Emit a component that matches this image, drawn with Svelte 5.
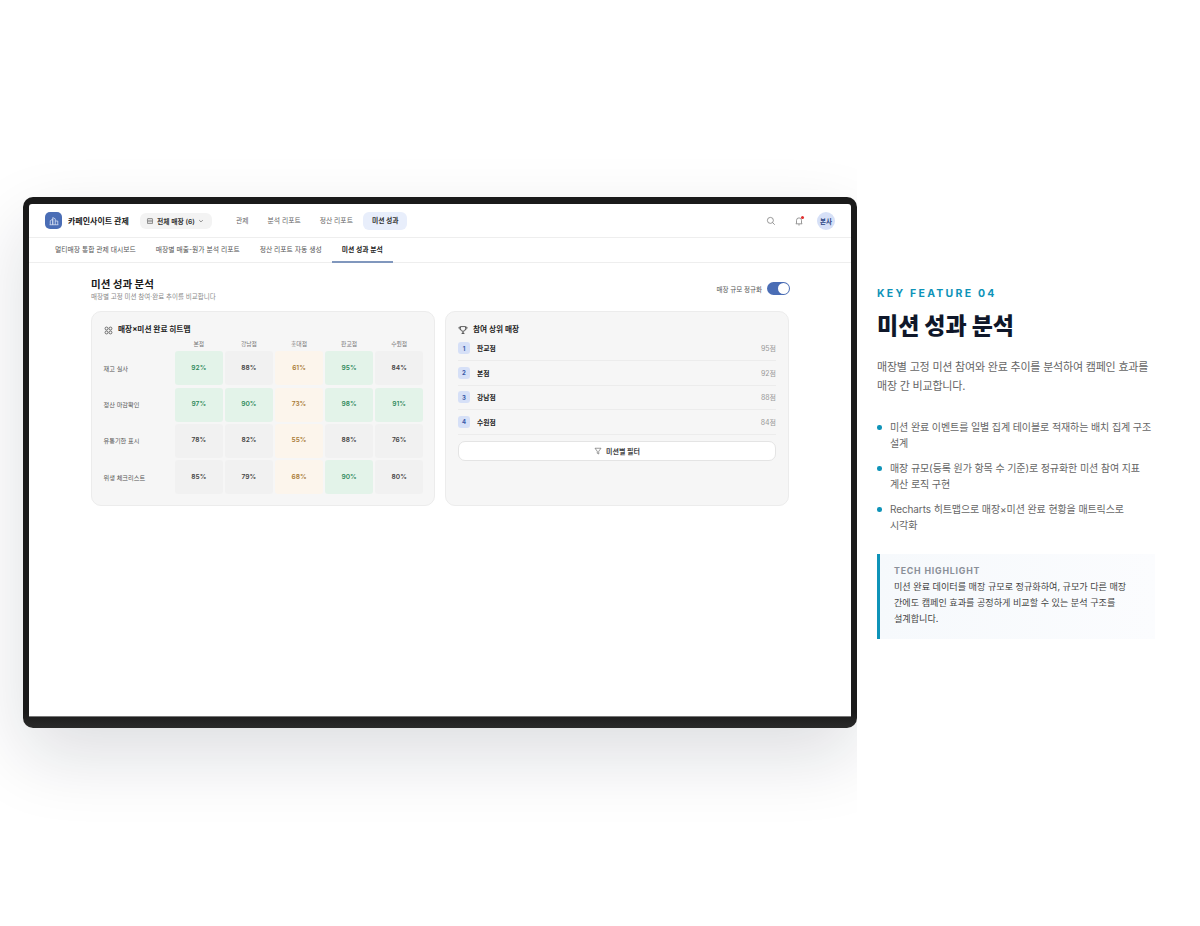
<script>
  const stores = ['본점', '강남점', '홍대점', '판교점', '수원점'];
  const heat = [
    { name: '재고 실사', values: [92, 88, 61, 95, 84] },
    { name: '정산 마감확인', values: [97, 90, 73, 98, 91] },
    { name: '유통기한 표시', values: [78, 82, 55, 88, 76] },
    { name: '위생 체크리스트', values: [85, 79, 68, 90, 80] }
  ];
  const ranking = [
    { name: '판교점', score: 95 },
    { name: '본점', score: 92 },
    { name: '강남점', score: 88 },
    { name: '수원점', score: 84 }
  ];
  const bullets = [
    '미션 완료 이벤트를 일별 집계 테이블로 적재하는 배치 집계 구조 설계',
    '매장 규모(등록 원가 항목 수 기준)로 정규화한 미션 참여 지표 계산 로직 구현',
    'Recharts 히트맵으로 매장×미션 완료 현황을 매트릭스로 시각화'
  ];

  function tone(v, col) {
    if (col === 2) return 'warm';
    return v >= 90 ? 'good' : 'plain';
  }
</script>

<main class="page">
  <section class="stage">
    <div class="device">
      <div class="screen">
        <header class="topbar">
          <div class="logo">
            <svg viewBox="0 0 16 16" width="10" height="10" fill="none" stroke="#dfe7f7" stroke-width="1.2">
              <path d="M2 14V7.5L6 5v9M6 14V2.5l4 2V14M10 8h4v6M1 14h14" />
            </svg>
          </div>
          <span class="brand">카페인사이트 관제</span>
          <button class="scope">
            <svg viewBox="0 0 16 16" width="8" height="8" fill="none" stroke="#666" stroke-width="1.3">
              <path d="M2.5 6.5 3.5 3h9l1 3.5M2.5 6.5h11M3 6.5V13h10V6.5M3 9.5h10" />
            </svg>
            <span>전체 매장 (6)</span>
            <svg viewBox="0 0 10 10" width="6" height="6" fill="none" stroke="#666" stroke-width="1.2">
              <path d="M2 3.5 5 6.5 8 3.5" />
            </svg>
          </button>
          <nav class="menu">
            <span>관제</span>
            <span>분석 리포트</span>
            <span>정산 리포트</span>
            <span class="active">미션 성과</span>
          </nav>
          <div class="actions">
            <svg viewBox="0 0 16 16" width="10" height="10" fill="none" stroke="#777" stroke-width="1.2">
              <circle cx="7" cy="7" r="4.8" />
              <path d="M10.6 10.6 14 14" />
            </svg>
            <div class="bell">
              <svg viewBox="0 0 16 16" width="10" height="10" fill="none" stroke="#777" stroke-width="1.2">
                <path d="M4 11.5V7a4 4 0 0 1 8 0v4.5l1 1H3zM6.8 14.2h2.4" />
              </svg>
              <i></i>
            </div>
            <div class="avatar">본사</div>
          </div>
        </header>

        <div class="tabs">
          <span>멀티매장 통합 관제 대시보드</span>
          <span>매장별 매출-원가 분석 리포트</span>
          <span>정산 리포트 자동 생성</span>
          <span class="active">미션 성과 분석</span>
        </div>

        <div class="content">
          <div class="head">
            <div>
              <h2>미션 성과 분석</h2>
              <p>매장별 고정 미션 참여·완료 추이를 비교합니다</p>
            </div>
            <div class="switch">
              <span>매장 규모 정규화</span>
              <div class="toggle"><i></i></div>
            </div>
          </div>

          <div class="cards">
            <div class="card heat">
              <h3>
                <svg viewBox="0 0 16 16" width="9" height="9" fill="none" stroke="#444" stroke-width="1.3">
                  <circle cx="4.5" cy="4.5" r="2.6" />
                  <circle cx="11.5" cy="4.5" r="2.6" />
                  <circle cx="4.5" cy="11.5" r="2.6" />
                  <circle cx="11.5" cy="11.5" r="2.6" />
                </svg>
                매장×미션 완료 히트맵
              </h3>
              <div class="grid">
                <span></span>
                {#each stores as s}
                  <span class="store">{s}</span>
                {/each}
                {#each heat as row}
                  <span class="mission">{row.name}</span>
                  {#each row.values as v, i}
                    <div class="cell {tone(v, i)}">{v}%</div>
                  {/each}
                {/each}
              </div>
            </div>

            <div class="card">
              <h3>
                <svg viewBox="0 0 16 16" width="10" height="10" fill="none" stroke="#444" stroke-width="1.3">
                  <path d="M4 2.5h8v3.5a4 4 0 0 1-8 0zM4 3.5H1.5c0 2.5 1 3.5 3 4M12 3.5h2.5c0 2.5-1 3.5-3 4M8 10v2.5M8 12.5 6 13.5h4z" />
                </svg>
                참여 상위 매장
              </h3>
              <ul class="rank">
                {#each ranking as r, i}
                  <li>
                    <b>{i + 1}</b>
                    <span class="store-name">{r.name}</span>
                    <span class="score">{r.score}점</span>
                  </li>
                {/each}
              </ul>
              <button class="filter">
                <svg viewBox="0 0 16 16" width="8" height="8" fill="none" stroke="#666" stroke-width="1.3">
                  <path d="M2 2.5h12L9.5 8.5V14l-3-1.5v-4z" />
                </svg>
                미션별 필터
              </button>
            </div>
          </div>
        </div>
      </div>
    </div>
  </section>

  <aside class="copy">
    <div class="eyebrow">KEY FEATURE 04</div>
    <h1>미션 성과 분석</h1>
    <p class="lead">매장별 고정 미션 참여와 완료 추이를 분석하여 캠페인 효과를 매장 간 비교합니다.</p>
    <ul class="points">
      {#each bullets as b}
        <li>{b}</li>
      {/each}
    </ul>
    <div class="highlight">
      <div class="label">TECH HIGHLIGHT</div>
      <p>미션 완료 데이터를 매장 규모로 정규화하여, 규모가 다른 매장 간에도 캠페인 효과를 공정하게 비교할 수 있는 분석 구조를 설계합니다.</p>
    </div>
  </aside>
</main>

<style>
  :global(body) {
    background: #fff;
    font-family: Inter, "Noto Sans CJK KR", sans-serif;
  }

  .page {
    display: flex;
    align-items: center;
    height: 926px;
    overflow: hidden;
    word-break: keep-all;
  }

  /* Device mockup */
  .stage {
    width: 857px;
    height: 926px;
    flex: none;
    overflow: hidden;
    display: flex;
    align-items: center;
    padding: 0 0 1px 23px;
    box-sizing: border-box;
  }

  .device {
    width: 834px;
    height: 531px;
    box-sizing: border-box;
    padding: 7px 6px 11px;
    background: linear-gradient(#1a1a1a 97%, #2a2a2a);
    border-radius: 10px;
    box-shadow: 0 28px 72px rgba(15, 23, 42, 0.14);
  }

  .screen {
    height: 100%;
    box-sizing: border-box;
    background: #fff;
    border-radius: 3px 3px 0 0;
    border-bottom: 1px solid #777;
    overflow: hidden;
  }

  .topbar {
    display: flex;
    align-items: center;
    height: 34px;
    box-sizing: border-box;
    padding: 0 16px;
    border-bottom: 1px solid #eee;
  }

  .logo {
    width: 17px;
    height: 17px;
    border-radius: 5px;
    background: #4a6db5;
    display: flex;
    align-items: center;
    justify-content: center;
    margin-right: 6px;
  }

  .brand {
    font-size: 8px;
    font-weight: 700;
    color: #1a1a1a;
    width: 72px;
    white-space: nowrap;
  }

  .scope {
    display: flex;
    align-items: center;
    gap: 3px;
    height: 16px;
    width: 72px;
    padding: 0 6px;
    box-sizing: border-box;
    border: 0;
    border-radius: 6px;
    background: #f3f3f3;
    font: 600 6.8px Inter, "Noto Sans CJK KR", sans-serif;
    color: #333;
    white-space: nowrap;
  }

  .menu {
    display: flex;
    align-items: center;
    margin-left: 15.5px;
    gap: 2px;
    font-size: 6.8px;
    color: #666;
  }

  .menu span {
    padding: 4px 8.5px;
    line-height: 10px;
    border-radius: 6px;
  }

  .menu .active {
    background: #e8eefb;
    color: #333;
    font-weight: 600;
  }

  .actions {
    margin-left: auto;
    display: flex;
    align-items: center;
    gap: 18px;
  }

  .bell {
    position: relative;
    display: flex;
  }

  .bell i {
    position: absolute;
    top: 0;
    right: 0;
    width: 3.5px;
    height: 3.5px;
    border-radius: 50%;
    background: #e02d2d;
  }

  .avatar {
    width: 18px;
    height: 18px;
    margin-left: -5px;
    border-radius: 50%;
    background: #d6e0f7;
    color: #2c4684;
    font-size: 6.5px;
    font-weight: 700;
    display: flex;
    align-items: center;
    justify-content: center;
  }

  .tabs {
    display: flex;
    height: 25px;
    box-sizing: border-box;
    padding: 0 16px;
    border-bottom: 1px solid #eee;
    font-size: 6.8px;
    color: #555;
  }

  .tabs span {
    padding: 0 10px;
    line-height: 23px;
    white-space: nowrap;
    border-bottom: 2px solid transparent;
    height: 25px;
    box-sizing: border-box;
  }

  .tabs .active {
    color: #222;
    font-weight: 600;
    border-bottom-color: #8097bd;
  }

  .content {
    width: 698px;
    margin: 0 auto;
    padding-top: 13.5px;
  }

  .head {
    display: flex;
    justify-content: space-between;
    align-items: flex-start;
    height: 34.5px;
  }

  h2 {
    margin: 0;
    font-size: 10.5px;
    line-height: 15px;
    font-weight: 700;
    color: #1a1a1a;
  }

  .head p {
    margin: 1px 0 0;
    font-size: 6.5px;
    line-height: 9px;
    color: #8a8a8a;
  }

  .switch {
    display: flex;
    align-items: center;
    gap: 5px;
    font-size: 6.5px;
    color: #555;
    margin: 5.5px -1px 0 0;
  }

  .toggle {
    width: 23px;
    height: 13px;
    border-radius: 7px;
    background: #4a6db5;
    position: relative;
  }

  .toggle i {
    position: absolute;
    right: 1px;
    top: 1px;
    width: 11px;
    height: 11px;
    border-radius: 50%;
    background: #fff;
  }

  .cards {
    display: grid;
    grid-template-columns: 344px 344px;
    gap: 10px;
  }

  .card {
    height: 195px;
    box-sizing: border-box;
    padding: 12px 12px 0;
    background: #f6f6f6;
    border: 1px solid #ececec;
    border-radius: 10px;
  }

  .heat {
    padding: 12px 11px 0;
  }

  h3 {
    margin: 0;
    display: flex;
    align-items: center;
    gap: 5px;
    font-size: 7.7px;
    line-height: 12px;
    font-weight: 700;
    color: #1f1f1f;
  }

  .heat h3 {
    margin-left: 1px;
  }

  .grid {
    display: grid;
    grid-template-columns: 69.5px repeat(5, 47.6px);
    grid-template-rows: 10px repeat(4, 34px);
    gap: 2.3px 2.5px;
    margin-top: 3px;
  }

  .store {
    text-align: center;
    font-size: 5.8px;
    line-height: 10px;
    color: #777;
  }

  .mission {
    align-self: center;
    padding-left: 0.5px;
    font-size: 6.2px;
    color: #555;
    white-space: nowrap;
  }

  .cell {
    display: flex;
    align-items: center;
    justify-content: center;
    padding-bottom: 1px;
    box-sizing: border-box;
    border-radius: 3px;
    font-size: 6.6px;
    font-weight: 600;
  }

  .good {
    background: #e3f3e9;
    color: #2f8a5b;
  }

  .plain {
    background: #f1f1f1;
    color: #444;
  }

  .warm {
    background: #fcf5ec;
    color: #a87a35;
  }

  .rank {
    list-style: none;
    margin: 0.5px 0 0;
    padding: 0;
  }

  .rank li {
    display: flex;
    align-items: center;
    height: 24.5px;
    box-sizing: border-box;
    border-bottom: 1px solid #ececec;
  }

  .rank b {
    width: 12px;
    height: 12px;
    border-radius: 3px;
    margin-right: 7px;
    background: #d6e0f7;
    color: #3a5ba8;
    font-size: 6px;
    display: flex;
    align-items: center;
    justify-content: center;
  }

  .store-name {
    font-size: 6.8px;
    font-weight: 600;
    color: #222;
  }

  .score {
    margin-left: auto;
    font-size: 7px;
    color: #999;
  }

  .filter {
    display: flex;
    align-items: center;
    justify-content: center;
    gap: 4px;
    width: 100%;
    height: 20px;
    margin-top: 6.5px;
    background: #fff;
    border: 1px solid #e4e4e4;
    border-radius: 7px;
    font: 600 7px Inter, "Noto Sans CJK KR", sans-serif;
    color: #444;
  }

  /* Copy column */
  .copy {
    width: 278px;
    margin-left: 20px;
    flex: none;
  }

  .eyebrow {
    font-size: 10.5px;
    line-height: 14px;
    font-weight: 700;
    letter-spacing: 2.25px;
    color: #0e93b8;
  }

  h1 {
    margin: 7px 0 0;
    font-size: 23px;
    line-height: 36px;
    font-weight: 800;
    color: #0f172a;
  }

  .lead {
    margin: 14px 0 0;
    font-size: 11px;
    line-height: 19.5px;
    letter-spacing: -0.2px;
    color: #666;
  }

  .points {
    list-style: none;
    margin: 22.75px 0 0;
    padding: 0;
  }

  .points li {
    position: relative;
    padding: 0 2.5px 0 13px;
    margin-bottom: 9px;
    font-size: 10px;
    line-height: 16px;
    letter-spacing: -0.1px;
    color: #666;
  }

  .points li::before {
    content: '';
    position: absolute;
    left: 0;
    top: 6px;
    width: 4.5px;
    height: 4.5px;
    border-radius: 50%;
    background: #0e93b8;
  }

  .highlight {
    margin-top: 21px;
    padding: 9.5px 16px 0 14px;
    border-left: 3px solid #0e93b8;
    background: linear-gradient(90deg, #f6f9fc, #fbfcfe);
    height: 85px;
    box-sizing: border-box;
  }

  .label {
    font-size: 8.8px;
    line-height: 13px;
    font-weight: 700;
    letter-spacing: 0.8px;
    color: #8a8f98;
  }

  .highlight p {
    margin: 2.5px 0 0;
    font-size: 9.1px;
    line-height: 16px;
    color: #444;
  }
</style>
